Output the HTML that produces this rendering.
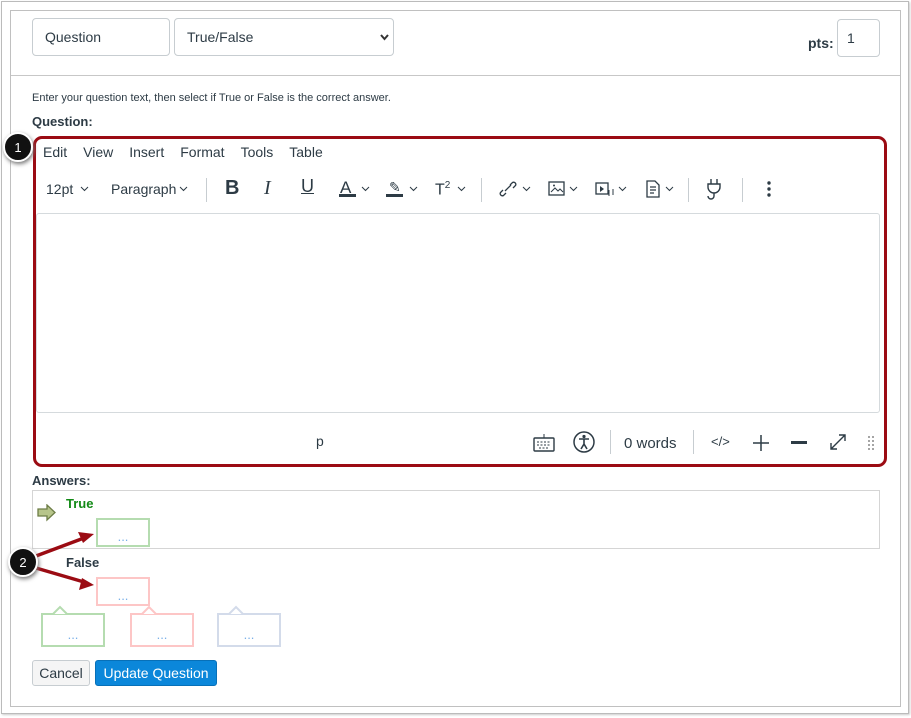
<!DOCTYPE html>
<html><head><style>
*{box-sizing:border-box;margin:0;padding:0}
body{width:911px;height:718px;background:#fff;position:relative;font-family:"Liberation Sans",sans-serif;color:#2d3b45;overflow:hidden}
.a{position:absolute}
.inp{position:absolute;border:1px solid #c7cdd1;border-radius:4px;background:#fff;font-size:14px;padding:0 12px;display:flex;align-items:center}
.menu span{margin-right:16px}
.tb{position:absolute;top:178px;font-size:14px;color:#2d3b45}
.sep{position:absolute;width:1px;background:#c7cdd1}
.bx{position:absolute;background:#fff;color:#7ab0e8;font-size:13px;text-align:center;letter-spacing:0px;line-height:1}
.cv{position:absolute;top:186px}
</style></head><body>
<div class="a" style="left:1px;top:1px;width:908px;height:713px;border:1px solid #bbb;box-shadow:1px 1px 2px #ccc"></div>
<div class="a" style="left:10px;top:10px;width:891px;height:697px;border:1px solid #c0c0c0"></div>
<div class="a" style="left:11px;top:75px;width:889px;height:1px;background:#c7c7c7"></div>

<div class="inp" style="left:32px;top:18px;width:138px;height:38px">Question</div>
<div class="inp" style="left:174px;top:18px;width:220px;height:38px">True/False<svg class="a" style="left:205px;top:15px" width="9" height="7"><path d="M1 1l3.5 4 3.5-4" stroke="#333" stroke-width="2" fill="none"/></svg></div>
<div class="a" style="left:808px;top:35px;font-size:14px;font-weight:bold">pts:</div>
<div class="inp" style="left:837px;top:19px;width:43px;height:38px;padding:0 9px">1</div>

<div class="a" style="left:32px;top:92px;font-size:11px">Enter your question text, then select if True or False is the correct answer.</div>
<div class="a" style="left:32px;top:114px;font-size:13px;font-weight:bold">Question:</div>

<div class="a" style="left:33px;top:136px;width:854px;height:331px;border:3px solid #9b0b13;border-radius:9px"></div>
<div class="a menu" style="left:43px;top:144px;font-size:14px"><span>Edit</span><span>View</span><span>Insert</span><span>Format</span><span>Tools</span><span>Table</span></div>

<div class="tb" style="left:46px;top:181px">12pt</div>
<div class="tb" style="left:111px;top:181px">Paragraph</div>
<div class="sep" style="left:206px;top:178px;height:24px"></div>
<div class="tb" style="left:225px;top:177px;font-size:20px;font-weight:bold">B</div>
<div class="tb" style="left:264px;top:177px;font-size:20px;font-style:italic;font-family:'Liberation Serif',serif">I</div>
<div class="tb" style="left:301px;top:176px;font-size:18px;text-decoration:underline">U</div>
<div class="tb" style="left:340px;top:178px;font-size:17px">A</div><div class="a" style="left:339px;top:194px;width:17px;height:3px;background:#2d3b45"></div>
<div class="tb" style="left:389px;top:179px">&#9998;</div><div class="a" style="left:386px;top:194px;width:17px;height:3px;background:#2d3b45"></div>
<div class="tb" style="left:435px;top:180px;font-size:16px">T<sup style="font-size:10px">2</sup></div>
<div class="sep" style="left:481px;top:178px;height:24px"></div>
<svg class="a" style="left:498px;top:180px" width="20" height="18"><path d="M8 13l-2.5 2.5a2.2 2.2 0 0 1-3-3L5 10M12 5l2.5-2.5a2.2 2.2 0 0 1 3 3L15 8M7 11l6-6" stroke="#2d3b45" fill="none" stroke-width="1.3"/></svg>
<svg class="a" style="left:548px;top:181px" width="18" height="15"><rect x="1" y="1" width="15" height="13" fill="none" stroke="#2d3b45" stroke-width="1.3"/><path d="M3 11l4-4 3 3 2-2 3 3" fill="none" stroke="#2d3b45"/><circle cx="6" cy="4.5" r="1" fill="#2d3b45"/></svg>
<svg class="a" style="left:595px;top:182px" width="20" height="16"><rect x="1" y="1" width="12" height="11" fill="none" stroke="#2d3b45" stroke-width="1.3"/><path d="M5 4l4 3-4 3z" fill="#2d3b45"/><path d="M14 8v6M18 7v6" stroke="#2d3b45"/></svg>
<svg class="a" style="left:646px;top:180px" width="14" height="18"><path d="M1 1h8l4 4v12H1z M4 7h6M4 10h6M4 13h4" fill="none" stroke="#2d3b45" stroke-width="1.3"/></svg>
<svg class="a" style="left:0;top:185px" width="700" height="8" fill="none" stroke="#2d3b45" stroke-width="1"><path d="M81 2l3.5 3.5 3.5-3.5M180 2l3.5 3.5 3.5-3.5M362 2l3.5 3.5 3.5-3.5M410 2l3.5 3.5 3.5-3.5M458 2l3.5 3.5 3.5-3.5M523 2l3.5 3.5 3.5-3.5M570 2l3.5 3.5 3.5-3.5M619 2l3.5 3.5 3.5-3.5M666 2l3.5 3.5 3.5-3.5"/></svg>
<div class="sep" style="left:688px;top:178px;height:24px"></div>
<svg class="a" style="left:706px;top:178px" width="16" height="22"><path d="M5 1v5M11 1v5M2 6h12v3a6 6 0 0 1-12 0zM8 15v3a3 3 0 0 1-6 0" fill="none" stroke="#2d3b45" stroke-width="1.4"/></svg>
<div class="sep" style="left:742px;top:178px;height:24px"></div>
<svg class="a" style="left:766px;top:180px" width="6" height="18"><circle cx="3" cy="3" r="1.7" fill="#2d3b45"/><circle cx="3" cy="9" r="1.7" fill="#2d3b45"/><circle cx="3" cy="15" r="1.7" fill="#2d3b45"/></svg>

<div class="a" style="left:36px;top:213px;width:844px;height:200px;border:1px solid #d5dadd;border-radius:3px"></div>
<div class="a" style="left:316px;top:433px;font-size:14px">p</div>
<svg class="a" style="left:533px;top:433px" width="22" height="20"><path d="M11 1v4" stroke="#2d3b45"/><rect x="1" y="5" width="20" height="13" rx="1" fill="none" stroke="#2d3b45" stroke-width="1.4"/><path d="M4 9h14M4 12h14M6 15h10" stroke="#2d3b45" stroke-dasharray="2 1.5"/></svg>
<svg class="a" style="left:573px;top:431px" width="22" height="22"><circle cx="11" cy="11" r="10" fill="none" stroke="#2d3b45" stroke-width="1.5"/><circle cx="11" cy="5.5" r="1.6" fill="#2d3b45"/><path d="M6 8h10M11 8v5l-3 5M11 13l3 5" stroke="#2d3b45" stroke-width="1.6" fill="none"/></svg>
<div class="sep" style="left:610px;top:430px;height:24px"></div>
<div class="a" style="left:624px;top:435px;font-size:15px">0 words</div>
<div class="sep" style="left:693px;top:430px;height:24px"></div>
<div class="a" style="left:711px;top:434px;font-size:13px">&lt;/&gt;</div>
<svg class="a" style="left:752px;top:434px" width="18" height="18"><path d="M9 1v16M1 9h16" stroke="#2d3b45" stroke-width="1.5"/></svg>
<div class="a" style="left:791px;top:441px;width:16px;height:3px;background:#2d3b45"></div>
<svg class="a" style="left:829px;top:433px" width="18" height="18"><path d="M2 16L16 2M2 10v6h6M10 2h6v6" stroke="#2d3b45" stroke-width="1.4" fill="none"/></svg>
<svg class="a" style="left:867px;top:435px" width="8" height="16" fill="#888"><circle cx="2" cy="2" r="1"/><circle cx="6" cy="2" r="1"/><circle cx="2" cy="6" r="1"/><circle cx="6" cy="6" r="1"/><circle cx="2" cy="10" r="1"/><circle cx="6" cy="10" r="1"/><circle cx="2" cy="14" r="1"/><circle cx="6" cy="14" r="1"/></svg>

<div class="a" style="left:32px;top:473px;font-size:13px;font-weight:bold">Answers:</div>
<div class="a" style="left:32px;top:490px;width:848px;height:59px;border:1px solid #d5d5d5"></div>
<svg class="a" style="left:36px;top:504px" width="22" height="18"><path d="M2 5h9V1l8 7.5-8 7.5v-4H2z" fill="#b7c58b" stroke="#6d7d46" stroke-width="1.3"/></svg>
<div class="a" style="left:66px;top:496px;font-size:13px;font-weight:bold;color:#128a16">True</div>
<div class="bx" style="left:96px;top:518px;width:54px;height:29px;border:2px solid #b5dcb0;padding-top:10px">...</div>
<div class="a" style="left:66px;top:555px;font-size:13px;font-weight:bold">False</div>
<div class="bx" style="left:96px;top:577px;width:54px;height:29px;border:2px solid #fdc6c6;padding-top:10px">...</div>

<div class="bx" style="left:41px;top:613px;width:64px;height:34px;border:2px solid #b5dcb0;padding-top:13px">...</div>
<div class="bx" style="left:130px;top:613px;width:64px;height:34px;border:2px solid #fdc6c6;padding-top:13px">...</div>
<div class="bx" style="left:217px;top:613px;width:64px;height:34px;border:2px solid #d3dbea;padding-top:13px">...</div>
<svg class="a" style="left:0;top:600px" width="300" height="16"><path d="M53 14l7-7 7 7" fill="#fff" stroke="#b5dcb0" stroke-width="2"/><path d="M142 14l7-7 7 7" fill="#fff" stroke="#fdc6c6" stroke-width="2"/><path d="M229 14l7-7 7 7" fill="#fff" stroke="#d3dbea" stroke-width="2"/></svg>

<div class="a" style="left:32px;top:660px;width:58px;height:26px;background:#f5f5f5;border:1px solid #c7cdd1;border-radius:3px;font-size:14px;text-align:center;line-height:24px">Cancel</div>
<div class="a" style="left:95px;top:660px;width:122px;height:26px;background:#0b87da;border:1px solid #0770b8;border-radius:3px;font-size:14px;color:#fff;text-align:center;line-height:24px">Update Question</div>

<svg class="a" style="left:0;top:0" width="911" height="718">
<path d="M36 556L84 538" stroke="#9b0b13" stroke-width="3.5"/><path d="M94 534l-16-2 5 11z" fill="#9b0b13"/>
<path d="M36 568L84 582" stroke="#9b0b13" stroke-width="3.5"/><path d="M94 585l-15 5 3-12z" fill="#9b0b13"/>
<circle cx="18" cy="147" r="14" fill="#111" stroke="#fff" stroke-width="2" style="filter:drop-shadow(1px 2px 2px #777)"/>
<text x="18" y="152" font-size="13" fill="#fff" text-anchor="middle" font-family="Liberation Sans">1</text>
<circle cx="23" cy="562" r="14" fill="#111" stroke="#fff" stroke-width="2" style="filter:drop-shadow(1px 2px 2px #777)"/>
<text x="23" y="567" font-size="13" fill="#fff" text-anchor="middle" font-family="Liberation Sans">2</text>
</svg>
</body></html>
